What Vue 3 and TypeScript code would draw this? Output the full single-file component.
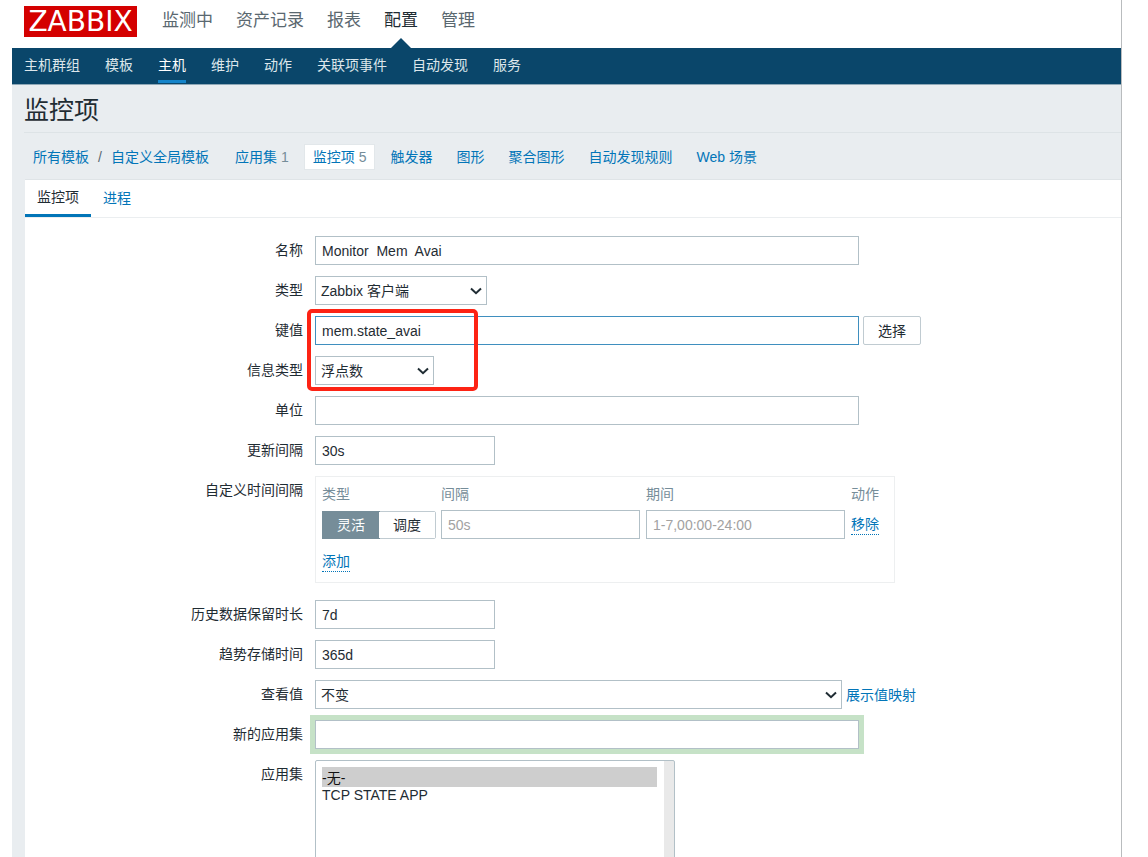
<script setup lang="ts">
import { ref } from 'vue'

interface NavItem {
  label: string
  active?: boolean
}

interface Crumb {
  label: string
  count?: number
  active?: boolean
}

const mainNav: NavItem[] = [
  { label: '监测中' },
  { label: '资产记录' },
  { label: '报表' },
  { label: '配置', active: true },
  { label: '管理' },
]

const subNav: NavItem[] = [
  { label: '主机群组' },
  { label: '模板' },
  { label: '主机', active: true },
  { label: '维护' },
  { label: '动作' },
  { label: '关联项事件' },
  { label: '自动发现' },
  { label: '服务' },
]

const sections: Crumb[] = [
  { label: '应用集', count: 1 },
  { label: '监控项', count: 5, active: true },
  { label: '触发器' },
  { label: '图形' },
  { label: '聚合图形' },
  { label: '自动发现规则' },
  { label: 'Web 场景' },
]

const name = ref('Monitor  Mem  Avai')
const itemType = ref('Zabbix 客户端')
const key = ref('mem.state_avai')
const valueType = ref('浮点数')
const units = ref('')
const delay = ref('30s')
const intervalMode = ref<'flexible' | 'scheduling'>('flexible')
const flexDelay = ref('')
const flexPeriod = ref('')
const history = ref('7d')
const trends = ref('365d')
const valueMap = ref('不变')
const newApplication = ref('')
const applications = ref<string[]>(['-无-'])
</script>

<template>
  <div class="shell">
    <header class="top">
      <a class="logo" href="#">ZABBIX</a>
      <nav class="main-nav">
        <a v-for="item in mainNav" :key="item.label" href="#" :class="{ active: item.active }">{{ item.label }}</a>
      </nav>
    </header>

    <nav class="sub-nav">
      <a v-for="item in subNav" :key="item.label" href="#" :class="{ active: item.active }">{{ item.label }}</a>
    </nav>

    <main class="content">
      <h1>监控项</h1>

      <nav class="crumbs">
        <div class="path">
          <a href="#">所有模板</a>
          <span class="slash">/</span>
          <a href="#">自定义全局模板</a>
        </div>
        <span v-for="s in sections" :key="s.label" class="section" :class="{ active: s.active }">
          <a href="#">{{ s.label }}</a><span v-if="s.count" class="count">{{ s.count }}</span>
        </span>
      </nav>

      <section class="panel">
        <div class="tabs" role="tablist">
          <button type="button" role="tab" class="tab active" aria-selected="true">监控项</button>
          <button type="button" role="tab" class="tab" aria-selected="false">进程</button>
        </div>

        <form class="form" @submit.prevent>
          <div class="row">
            <label for="name">名称</label>
            <div class="control"><input id="name" v-model="name" class="wide" type="text" /></div>
          </div>

          <div class="row">
            <label for="type">类型</label>
            <div class="control">
              <span class="select type">
                <select id="type" v-model="itemType"><option>Zabbix 客户端</option></select>
                <svg viewBox="0 0 12 8" aria-hidden="true"><path d="M1 1.500 6 6.200 11 1.500" /></svg>
              </span>
            </div>
          </div>

          <div class="row">
            <label for="key">键值</label>
            <div class="control marked">
              <input id="key" v-model="key" class="wide current" type="text" />
              <button type="button" class="btn">选择</button>
              <span class="marker" aria-hidden="true"></span>
            </div>
          </div>

          <div class="row">
            <label for="value-type">信息类型</label>
            <div class="control">
              <span class="select value-type">
                <select id="value-type" v-model="valueType"><option>浮点数</option></select>
                <svg viewBox="0 0 12 8" aria-hidden="true"><path d="M1 1.500 6 6.200 11 1.500" /></svg>
              </span>
            </div>
          </div>

          <div class="row">
            <label for="units">单位</label>
            <div class="control"><input id="units" v-model="units" class="wide" type="text" /></div>
          </div>

          <div class="row">
            <label for="delay">更新间隔</label>
            <div class="control"><input id="delay" v-model="delay" class="short" type="text" /></div>
          </div>

          <div class="row intervals">
            <span class="label">自定义时间间隔</span>
            <div class="control">
              <div class="box">
                <table>
                  <thead>
                    <tr>
                      <th class="c-mode">类型</th>
                      <th class="c-field">间隔</th>
                      <th class="c-field">期间</th>
                      <th>动作</th>
                    </tr>
                  </thead>
                  <tbody>
                    <tr>
                      <td>
                        <div class="segmented">
                          <button type="button" :class="{ on: intervalMode === 'flexible' }" @click="intervalMode = 'flexible'">灵活</button>
                          <button type="button" :class="{ on: intervalMode === 'scheduling' }" @click="intervalMode = 'scheduling'">调度</button>
                        </div>
                      </td>
                      <td><input v-model="flexDelay" class="cell" type="text" placeholder="50s" aria-label="间隔" /></td>
                      <td><input v-model="flexPeriod" class="cell" type="text" placeholder="1-7,00:00-24:00" aria-label="期间" /></td>
                      <td><button type="button" class="link">移除</button></td>
                    </tr>
                  </tbody>
                </table>
                <button type="button" class="link">添加</button>
              </div>
            </div>
          </div>

          <div class="row">
            <label for="history">历史数据保留时长</label>
            <div class="control"><input id="history" v-model="history" class="short" type="text" /></div>
          </div>

          <div class="row">
            <label for="trends">趋势存储时间</label>
            <div class="control"><input id="trends" v-model="trends" class="short" type="text" /></div>
          </div>

          <div class="row">
            <label for="valuemap">查看值</label>
            <div class="control">
              <span class="select valuemap">
                <select id="valuemap" v-model="valueMap"><option>不变</option></select>
                <svg viewBox="0 0 12 8" aria-hidden="true"><path d="M1 1.500 6 6.200 11 1.500" /></svg>
              </span>
              <a href="#">展示值映射</a>
            </div>
          </div>

          <div class="row">
            <label for="new-app">新的应用集</label>
            <div class="control"><input id="new-app" v-model="newApplication" class="wide fresh" type="text" /></div>
          </div>

          <div class="row">
            <label for="apps">应用集</label>
            <div class="control">
              <select id="apps" v-model="applications" class="list" multiple>
                <option>-无-</option>
                <option>TCP STATE APP</option>
              </select>
            </div>
          </div>
        </form>
      </section>
    </main>
  </div>
</template>

<style>
body {
  margin: 0;
  background: #fff;
}
</style>

<style scoped>
.shell {
  box-sizing: border-box;
  display: flex;
  flex-direction: column;
  height: 100vh;
  overflow: hidden;
  margin: 0 26px 0 12px;
  border-right: 1px solid #b9bcbe;
  font-family: 'Liberation Sans', 'Noto Sans CJK SC', sans-serif;
  font-size: 14px;
  line-height: 20px;
  color: #1f2c33;
}

.shell *,
.shell *::before {
  box-sizing: border-box;
}

a {
  color: #0275b8;
  text-decoration: none;
}

button,
input,
select {
  margin: 0;
  font: inherit;
  color: inherit;
}

.top {
  display: flex;
  flex: none;
  gap: 25px;
  height: 48px;
  padding: 6px 12px 0;
}

.logo {
  width: 113px;
  height: 31px;
  background: #d40000;
  color: #fff;
  font-family: 'DejaVu Sans', sans-serif;
  font-size: 28px;
  line-height: 32px;
  text-align: center;
}

.main-nav {
  display: flex;
  gap: 23px;
  font-size: 17px;
  line-height: 30px;
}

.main-nav a {
  position: relative;
  color: #5a6870;
}

.main-nav a.active {
  color: #1f2c33;
}

.main-nav a.active::before {
  content: '';
  position: absolute;
  bottom: 0;
  left: 50%;
  margin-left: -10px;
  border: 10px solid transparent;
  border-top: 0;
  border-bottom-color: #0a466a;
}

.sub-nav {
  display: flex;
  flex: none;
  gap: 25px;
  height: 37px;
  padding: 0 12px;
  background: #0a466a;
  border-bottom: 1px solid #8fa8b7;
}

.sub-nav a {
  height: 35px;
  line-height: 35px;
  color: #dde6eb;
}

.sub-nav a.active {
  color: #fff;
  border-bottom: 3px solid #1484ca;
}

.content {
  display: flex;
  flex: 1;
  flex-direction: column;
  min-height: 0;
  padding-left: 12px;
  background: #e9edf0;
}

h1 {
  flex: none;
  height: 48px;
  margin: 0;
  border-bottom: 1px solid #dde3e6;
  font-size: 25px;
  font-weight: 400;
  line-height: 51px;
}

.crumbs {
  display: flex;
  flex: none;
  align-items: center;
  height: 46px;
  padding: 2px 9px 0;
}

.path {
  display: flex;
  margin-right: 10px;
}

.slash {
  padding: 0 9px;
  color: #5a6870;
}

.section {
  display: flex;
  gap: 4px;
  margin-left: 8px;
  padding: 2px 8px;
}

.section.active {
  background: #fff;
  box-shadow: 0 0 0 1px #e2e7ea;
}

.count {
  color: #768d99;
}

.panel {
  flex: 1;
  min-height: 0;
  margin-left: 1px;
  background: #fff;
  border-top: 1px solid #dfe4e7;
}

.tabs {
  display: flex;
  height: 38px;
  border-bottom: 1px solid #ebeef0;
}

.tab {
  height: 37px;
  padding: 0 12px 2px;
  background: none;
  border: 0;
  color: #0275b8;
}

.tab.active {
  border-bottom: 3px solid #0275b8;
  padding: 0 12px;
  color: #1f2c33;
}

.form {
  display: flex;
  flex-direction: column;
  gap: 11px;
  padding-top: 18px;
}

.row {
  display: grid;
  grid-template-columns: 278px 1fr;
  column-gap: 12px;
}

.row > label,
.label {
  line-height: 28px;
  text-align: right;
}

.control {
  display: flex;
  gap: 4px;
  align-items: center;
  min-height: 29px;
}

input,
select {
  height: 29px;
  padding: 0 6px;
  background: #fff;
  border: 1px solid #b2c0c7;
  border-radius: 0;
  outline: 0;
}

input::placeholder {
  color: #a2a2a2;
  opacity: 1;
}

.wide {
  width: 544px;
}

.short {
  width: 180px;
}

.current {
  border-color: #3f8fbf;
}

.fresh {
  box-shadow: 0 0 0 5px #c6e2c7;
}

.select {
  position: relative;
  display: flex;
}

.select select {
  width: 100%;
  padding: 0 5px;
  appearance: none;
}

.select svg {
  position: absolute;
  top: 11px;
  right: 5px;
  width: 12px;
  height: 8px;
  fill: none;
  stroke: #1f2c33;
  stroke-width: 2;
  pointer-events: none;
}

.type {
  width: 172px;
}

.value-type {
  width: 119px;
}

.valuemap {
  width: 527px;
}

.btn {
  width: 58px;
  height: 29px;
  padding: 0;
  background: #fff;
  border: 1px solid #c0cbd1;
  border-radius: 2px;
}

.marked {
  position: relative;
}

.marker {
  position: absolute;
  z-index: 1;
  top: -7px;
  left: -8px;
  width: 171px;
  height: 82px;
  border: 4px solid #fd2314;
  border-radius: 5px;
  pointer-events: none;
}

.intervals {
  margin-bottom: 6px;
}

.box {
  width: 580px;
  height: 107px;
  padding: 6px;
  border: 1px solid #edeff0;
}

table {
  width: 100%;
  border-collapse: collapse;
  table-layout: fixed;
}

th {
  height: 27px;
  padding: 0 0 5px;
  color: #768d99;
  font-weight: 400;
  text-align: left;
}

td {
  padding: 0;
}

.c-mode {
  width: 119px;
}

.c-field {
  width: 205px;
}

.cell {
  width: 199px;
}

.segmented {
  display: flex;
  width: 114px;
  height: 28px;
  border: 1px solid #c0cbd1;
  border-radius: 2px;
}

.segmented button {
  flex: 1;
  padding: 0;
  background: #fff;
  border: 0;
}

.segmented .on {
  background: #768d99;
  box-shadow: 0 0 0 1px #768d99;
  color: #fff;
}

.link {
  height: 20px;
  padding: 0;
  background: none;
  border: 0;
  border-bottom: 1px dotted #0275b8;
  color: #0275b8;
  line-height: 19px;
}

.box > .link {
  margin-top: 13px;
}

.list {
  width: 360px;
  height: 160px;
  padding: 6px 17px 6px 6px;
  background: linear-gradient(#e9e9e9, #e9e9e9) right / 10px 100% no-repeat #fff;
  border-radius: 2px;
}

.list option {
  min-height: 18px;
  padding: 0;
  line-height: 18px;
}

.list option:checked {
  background: #cecece linear-gradient(#cecece, #cecece);
}
</style>
